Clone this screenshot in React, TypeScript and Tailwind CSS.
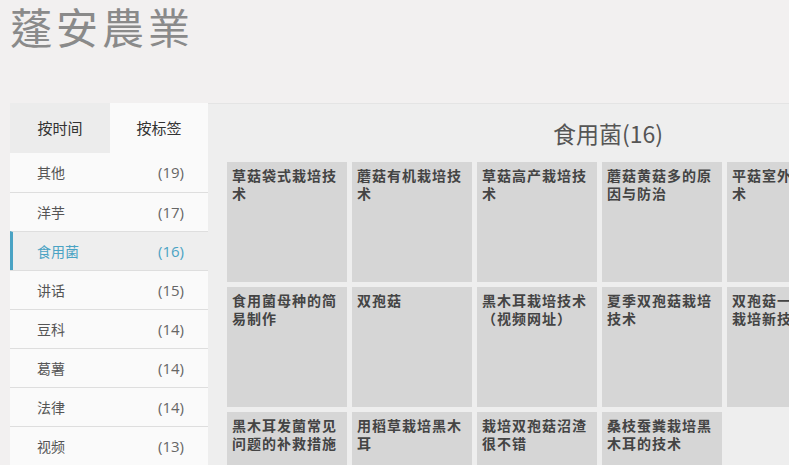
import React from 'react';

const tags = [
  { name: '其他', count: 19 },
  { name: '洋芋', count: 17 },
  { name: '食用菌', count: 16 },
  { name: '讲话', count: 15 },
  { name: '豆科', count: 14 },
  { name: '葛薯', count: 14 },
  { name: '法律', count: 14 },
  { name: '视频', count: 13 },
];

const articles = [
  '草菇袋式栽培技术',
  '蘑菇有机栽培技术',
  '草菇高产栽培技术',
  '蘑菇黄菇多的原因与防治',
  '平菇室外栽培技术',
  '香菇栽培技术',
  '食用菌母种的简易制作',
  '双孢菇',
  '黑木耳栽培技术（视频网址）',
  '夏季双孢菇栽培技术',
  '双孢菇一年两季栽培新技术',
  '金针菇栽培技术',
  '黑木耳发菌常见问题的补救措施',
  '用稻草栽培黑木耳',
  '栽培双孢菇沼渣很不错',
  '桑枝蚕粪栽培黑木耳的技术',
];

const sans = "font-['Noto_Sans_CJK_SC','Noto_Sans',sans-serif]";

const App: React.FC = () => {
  return (
    <div className="w-[789px] h-[465px] overflow-hidden bg-[#f2f0f0]">
      <div className="px-[10px] pt-[3px] h-[103px]">
        <h1 className="text-[42px] leading-[46px] tracking-[4px] text-[#8a8a8a] font-['Noto_Sans_CJK_TC',serif]">
          蓬安農業
        </h1>
      </div>

      <div className="flex pl-[10px]">
        {/* sidebar */}
        <div className={`w-[198px] shrink-0 ${sans}`}>
          <div className="flex h-[50px] text-[15px] text-[#333]">
            <div className="w-[100px] bg-[#ececec] flex items-center justify-center">按时间</div>
            <div className="w-[98px] bg-[#fafafa] flex items-center justify-center">按标签</div>
          </div>
          {tags.map((t, i) => {
            const active = t.name === '食用菌';
            return (
              <div
                key={t.name}
                className={`h-[39px] flex items-center justify-between pr-[24px] text-[14px] border-t border-[#dedede] ${
                  i === 0 ? 'border-t-0 h-[38px]' : ''
                } ${
                  active
                    ? 'bg-[#eeeeee] text-[#4aa3c4] border-l-[3px] border-l-[#4aa3c4] pl-[24px]'
                    : 'bg-[#fafafa] text-[#555] pl-[27px]'
                }`}
              >
                <span>{t.name}</span>
                <span className={`text-[15px] font-['Open_Sans',sans-serif] ${active ? 'text-[#4aa3c4]' : 'text-[#666]'}`}>
                  ({t.count})
                </span>
              </div>
            );
          })}
        </div>

        {/* content */}
        <div className="w-[800px] shrink-0 bg-[#eeeeee] border-t border-[#e4e4e4] pl-[19px]">
          <div className={`h-[58px] flex items-center justify-center pr-[19px] text-[23px] text-[#555] ${sans}`}>
            食用菌(16)
          </div>
          <div className="grid grid-cols-[repeat(6,120px)] gap-[5px]">
            {articles.map((a) => (
              <div
                key={a}
                className={`h-[120px] bg-[#d6d6d6] px-[5px] pt-[4px] text-[14px] leading-[18px] tracking-[1px] font-bold text-[#444] ${sans}`}
              >
                {a}
              </div>
            ))}
          </div>
        </div>
      </div>
    </div>
  );
};

export default App;
